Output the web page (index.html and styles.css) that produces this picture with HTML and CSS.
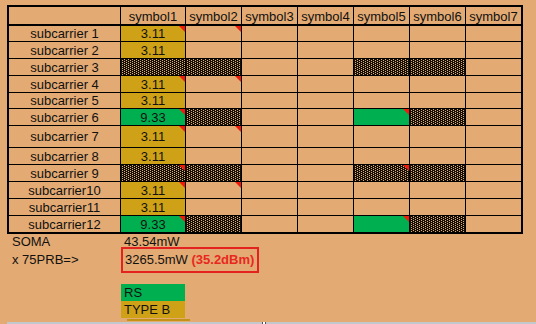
FILE: index.html
```html
<!DOCTYPE html>
<html>
<head>
<meta charset="utf-8">
<link rel="stylesheet" href="styles.css">
</head>
<body>
<div class="sheet">
  <div class="c h"></div><div class="c h">symbol1</div><div class="c h">symbol2</div><div class="c h">symbol3</div><div class="c h">symbol4</div><div class="c h">symbol5</div><div class="c h">symbol6</div><div class="c h">symbol7</div>

  <div class="c">subcarrier 1</div><div class="c g n">3.11</div><div class="c n"></div><div class="c"></div><div class="c"></div><div class="c"></div><div class="c"></div><div class="c"></div>
  <div class="c">subcarrier 2</div><div class="c g">3.11</div><div class="c"></div><div class="c"></div><div class="c"></div><div class="c"></div><div class="c"></div><div class="c"></div>
  <div class="c">subcarrier 3</div><div class="c p"></div><div class="c p"></div><div class="c"></div><div class="c"></div><div class="c p"></div><div class="c p"></div><div class="c"></div>
  <div class="c">subcarrier 4</div><div class="c g n">3.11</div><div class="c n"></div><div class="c"></div><div class="c"></div><div class="c"></div><div class="c"></div><div class="c"></div>
  <div class="c">subcarrier 5</div><div class="c g">3.11</div><div class="c"></div><div class="c"></div><div class="c"></div><div class="c"></div><div class="c"></div><div class="c"></div>
  <div class="c">subcarrier 6</div><div class="c gr n">9.33</div><div class="c p"></div><div class="c"></div><div class="c"></div><div class="c gr n"></div><div class="c p"></div><div class="c"></div>
  <div class="c">subcarrier 7</div><div class="c g n">3.11</div><div class="c n"></div><div class="c"></div><div class="c"></div><div class="c"></div><div class="c"></div><div class="c"></div>
  <div class="c">subcarrier 8</div><div class="c g">3.11</div><div class="c"></div><div class="c"></div><div class="c"></div><div class="c"></div><div class="c"></div><div class="c"></div>
  <div class="c">subcarrier 9</div><div class="c p n"></div><div class="c p"></div><div class="c"></div><div class="c"></div><div class="c p n"></div><div class="c p"></div><div class="c"></div>
  <div class="c">subcarrier10</div><div class="c g n">3.11</div><div class="c n"></div><div class="c"></div><div class="c"></div><div class="c"></div><div class="c"></div><div class="c"></div>
  <div class="c">subcarrier11</div><div class="c g">3.11</div><div class="c"></div><div class="c"></div><div class="c"></div><div class="c"></div><div class="c"></div><div class="c"></div>
  <div class="c">subcarrier12</div><div class="c gr n">9.33</div><div class="c p"></div><div class="c"></div><div class="c"></div><div class="c gr n"></div><div class="c p"></div><div class="c"></div>
</div>

<div class="summary">
  <div class="lbl r1">SOMA</div><div class="val r1">43.54mW</div>
  <div class="lbl r2">x 75PRB=&gt;</div><div class="box">3265.5mW <b class="dbm">(35.2dBm)</b></div>
</div>

<div class="legend">
  <div class="tag rs">RS</div>
  <div class="tag tb">TYPE B</div>
  <div class="strip"></div>
</div>

<div class="hbar"><span class="mark"></span></div>
</body>
</html>
```

FILE: styles.css
```css
html, body {
  margin: 0;
  padding: 0;
  height: 324px;
  overflow: hidden;
  background: #E3AA73;
  font-family: "Liberation Sans", Arial, sans-serif;
  font-size: 13px;
  color: #111;
}

.sheet {
  display: grid;
  grid-template-columns: 111px 64px repeat(6, 55px);
  grid-template-rows: 18px 15px 16px 16px 16px 15px 16px 21px 16px 16px 16px 16px 16px;
  gap: 1px;
  background: #000;
  border: 2px solid #000;
  width: max-content;
  margin: 5px 0 0 7px;
}

.c {
  position: relative;
  background: #E3AA73;
  display: flex;
  align-items: center;
  justify-content: center;
  line-height: 15px;
  white-space: nowrap;
  overflow: hidden;
}

.h {
  border-bottom: 1px solid #000;
  align-items: flex-end;
  line-height: 15px;
}

.g { background: #CFA116; }
.gr { background: #00B050; }

.p {
  background:
    conic-gradient(at 1px 1px, transparent 270deg, #E3AA73 0) 3px 0 / 4px 2px,
    conic-gradient(at 1px 1px, transparent 270deg, #E3AA73 0) 1px 1px / 4px 2px,
    #151008;
}

.n::after {
  content: "";
  position: absolute;
  top: 0;
  right: 0;
  width: 0;
  height: 0;
  border-top: 6px solid #F01A0A;
  border-left: 6px solid transparent;
}

.summary {
  display: grid;
  grid-template-columns: 121px auto;
  grid-template-rows: 13px 26px;
  width: max-content;
}

.lbl {
  padding-left: 12px;
  white-space: nowrap;
}
.r1 { line-height: 15px; }
.val { padding-left: 3px; }
.r2 { line-height: 26px; }

.box {
  box-sizing: border-box;
  width: 138px;
  height: 26px;
  border: 2px solid #E42320;
  padding-left: 2px;
  line-height: 22px;
  white-space: nowrap;
}
.dbm {
  color: #E8281F;
  font-weight: bold;
}

.legend {
  display: flex;
  flex-direction: column;
  margin: 11px 0 0 121px;
}
.tag {
  width: 64px;
  height: 17px;
  line-height: 17px;
  padding-left: 3px;
  box-sizing: border-box;
}
.rs { background: #00B050; }
.tb { background: #CFA116; }
.strip {
  width: 63px;
  height: 2px;
  margin: 1px 0 0 6px;
  background: #C39413;
}

.hbar {
  display: flex;
  height: 2px;
  margin: 1px 0 0 7px;
  background: #C4C7CB;
}
.mark {
  width: 4px;
  height: 2px;
  margin-left: 255px;
  background: #fff;
  box-shadow: inset 1px 0 0 #555, inset -1px 0 0 #555;
}
```
